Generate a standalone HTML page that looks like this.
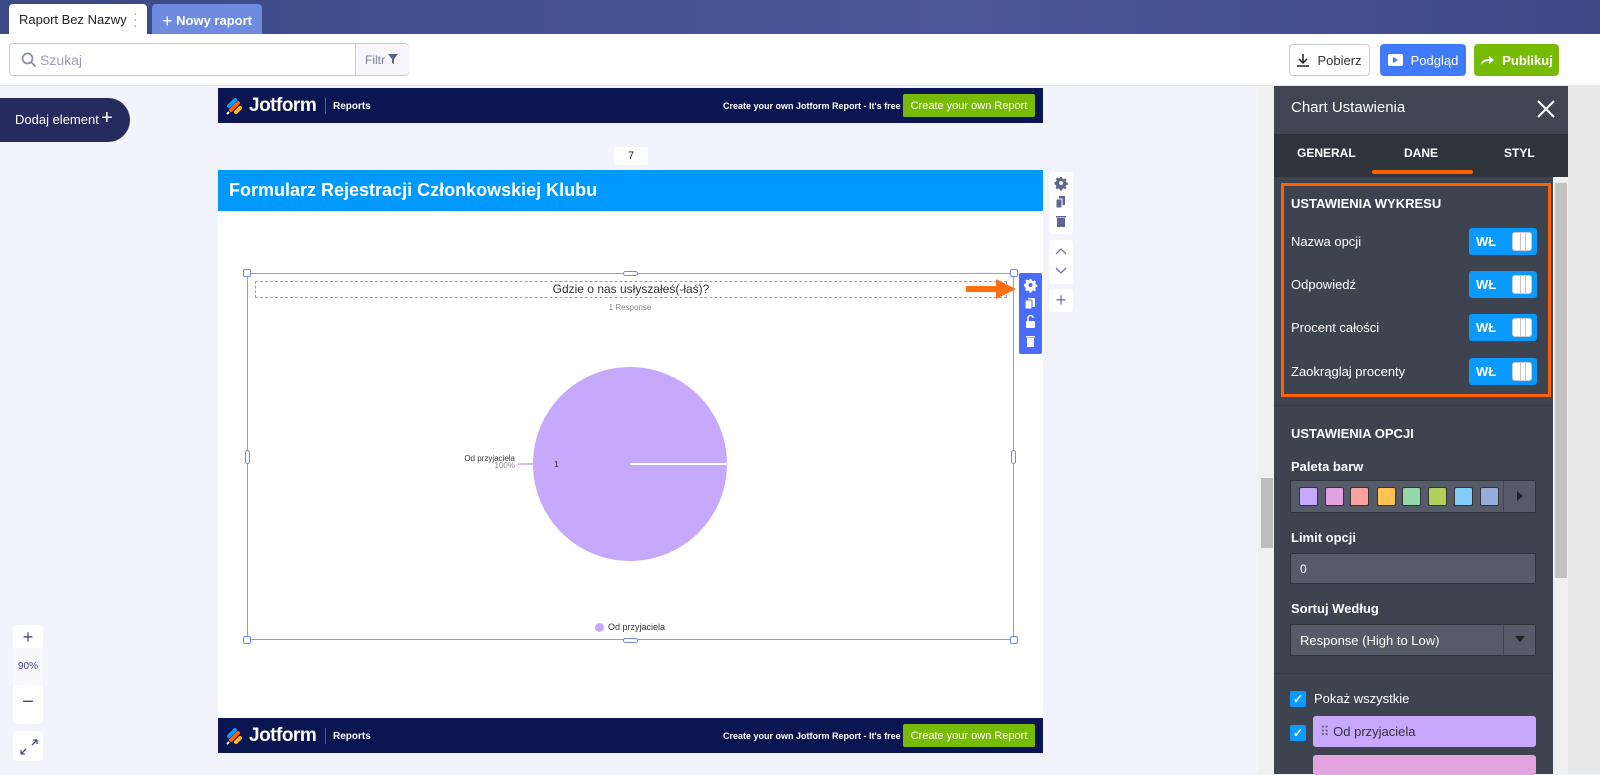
<!DOCTYPE html>
<html><head><meta charset="utf-8">
<style>
*{box-sizing:border-box;margin:0;padding:0}
body{width:1600px;height:774px;overflow:hidden;font-family:"Liberation Sans",sans-serif;background:#f3f3fc;position:relative;font-size:13px}
.a{position:absolute}
.top{left:0;top:0;width:1600px;height:34px;background:linear-gradient(90deg,#3b4a85,#4a5796 60%,#3d4a86);}
.tab1{left:9px;top:4px;width:138px;height:30px;background:#fff;border-radius:4px 4px 0 0;font-size:13px;color:#222;padding:8px 0 0 10px}
.tab2{left:152px;top:4px;width:110px;height:30px;background:#6e8cdf;border-radius:4px 4px 0 0;color:#fff;font-weight:bold;font-size:13px;padding:7px 0 0 10px}
.bar{left:0;top:34px;width:1600px;height:52px;background:#fff;border-bottom:1px solid #e3e5ef}
.search{left:9px;top:43px;width:400px;height:33px;border:1px solid #c9cbd6;border-radius:4px;background:#fff}
.btn{top:44px;height:32px;border-radius:4px;font-size:13px;display:flex;align-items:center;justify-content:center;gap:8px}
.navy{background:#0a1551;left:218px;width:825px;height:35px}
.jf{color:#fff;font-weight:bold;font-size:19px;letter-spacing:-.5px}
.green{background:#78bb07;color:#fff;font-size:11px;border-radius:2px}
.tog{left:1469px;width:68px;height:27px;background:#0a99ff;border-radius:3px;color:#fff;font-weight:bold;font-size:13px;padding:6px 0 0 7px}
.tog i{position:absolute;right:5px;top:4px;width:20px;height:19px;border-radius:3px;border:1px solid #ccc;background:repeating-linear-gradient(90deg,#fff 0 4px,#c4c4c4 4px 5px) 3px 0/12px 100% no-repeat #fff;}
.lbl{left:1291px;color:#fff;font-size:13px}
.h{left:1291px;color:#fff;font-size:13px;font-weight:bold}
.inp{left:1290px;width:246px;background:#555b69;border:1px solid #2f333c;border-radius:2px;color:#fff}
.sw{top:487px;width:19px;height:19px;border:1px solid #333;border-radius:2px}
.cb{left:1290px;width:16px;height:16px;background:#0a99ff;border-radius:2px;color:#fff;font-size:12px;text-align:center;line-height:16px;font-weight:bold}
.tb{background:#fff;border-radius:3px;left:1049px;width:24px;color:#6f76a7;text-align:center}
</style></head><body>
<div class="a top"></div>
<div class="a tab1">Raport Bez Nazwy <span style="color:#999;position:absolute;left:124px;top:6px;font-size:14px;line-height:6px">·<br>·<br>·</span></div>
<div class="a tab2"><span style="font-size:18px;font-weight:normal;vertical-align:-2px">+</span> Nowy raport</div>
<div class="a bar"></div>
<div class="a search">
<svg class="a" style="left:11px;top:8px" width="16" height="16" viewBox="0 0 16 16"><circle cx="6.5" cy="6.5" r="5" stroke="#8a8fa8" stroke-width="1.8" fill="none"/><path d="M10 10l4.5 4.5" stroke="#8a8fa8" stroke-width="1.8"/></svg>
<span class="a" style="left:30px;top:8px;color:#9a9eb3;font-size:14px">Szukaj</span>
<div class="a" style="left:345px;top:0;width:54px;height:31px;border-left:1px solid #c9cbd6;background:#f7f7fb;color:#7a7f9a;font-size:12px;padding:9px 0 0 9px;border-radius:0 4px 4px 0">Filtr <svg width="10" height="10" viewBox="0 0 10 10"><path d="M0 0h10L6 5v5L4 9V5z" fill="#5a6290"/></svg></div>
</div>
<div class="a btn" style="left:1289px;width:81px;border:1px solid #c9cbd6;color:#333;background:#fff"><svg width="12" height="13" viewBox="0 0 12 13"><path d="M6 0v9M2 5l4 4 4-4M0 12h12" stroke="#222" stroke-width="1.5" fill="none"/></svg>Pobierz</div>
<div class="a btn" style="left:1380px;width:86px;background:#3f7bfa;color:#fff"><svg width="15" height="12"><rect width="15" height="12" rx="2" fill="#fff"/><path d="M5 3l5 3-5 3z" fill="#3f7bfa"/></svg>Podgląd</div>
<div class="a btn" style="left:1474px;width:85px;background:#78bb07;color:#fff;font-weight:bold"><svg width="14" height="11"><path d="M1 10C2 5 5 4 9 4V1l5 4-5 4V6C6 6 3 7 1 10z" fill="#fff"/></svg>Publikuj</div>

<div class="a" style="left:0;top:98px;width:130px;height:44px;background:#252b5c;border-radius:0 22px 22px 0;color:#fff;font-size:13px;padding:14px 0 0 15px">Dodaj element <span style="font-size:20px;position:absolute;left:101px;top:10px;line-height:20px">+</span></div>

<!-- report -->
<div class="a navy" style="top:88px">
<svg class="a" style="left:8px;top:9px" width="18" height="18" viewBox="0 0 18 18"><path d="M3 9l6-6" stroke="#0a99ff" stroke-width="4" stroke-linecap="round"/><path d="M5 13l7-7" stroke="#ff6100" stroke-width="4" stroke-linecap="round"/><path d="M10 15l4-4" stroke="#ffb629" stroke-width="4" stroke-linecap="round"/><path d="M1 17l2-2" stroke="#fff" stroke-width="2"/></svg>
<span class="a jf" style="left:31px;top:7px">Jotform</span>
<div class="a" style="left:107px;top:10px;width:1px;height:16px;background:#555c88"></div>
<span class="a" style="left:115px;top:13px;color:#fff;font-weight:bold;font-size:10px">Reports</span>
<span class="a" style="left:505px;top:13px;color:#fff;font-size:9px;font-weight:bold">Create your own Jotform Report - It's free</span>
<div class="a green" style="left:685px;top:6px;width:132px;height:23px;padding-top:6px;text-align:center">Create your own Report</div>
</div>
<div class="a" style="left:614px;top:147px;width:34px;height:18px;background:#fff;border-radius:2px;text-align:center;font-size:11px;padding-top:3px;color:#222">7</div>
<div class="a" style="left:218px;top:170px;width:825px;height:41px;background:#0099ff;color:#fff;font-weight:bold;font-size:18px;padding:10px 0 0 11px">Formularz Rejestracji Członkowskiej Klubu</div>
<div class="a" style="left:218px;top:211px;width:825px;height:507px;background:#fff"></div>
<div class="a navy" style="top:718px">
<svg class="a" style="left:8px;top:9px" width="18" height="18" viewBox="0 0 18 18"><path d="M3 9l6-6" stroke="#0a99ff" stroke-width="4" stroke-linecap="round"/><path d="M5 13l7-7" stroke="#ff6100" stroke-width="4" stroke-linecap="round"/><path d="M10 15l4-4" stroke="#ffb629" stroke-width="4" stroke-linecap="round"/><path d="M1 17l2-2" stroke="#fff" stroke-width="2"/></svg>
<span class="a jf" style="left:31px;top:7px">Jotform</span>
<div class="a" style="left:107px;top:10px;width:1px;height:16px;background:#555c88"></div>
<span class="a" style="left:115px;top:13px;color:#fff;font-weight:bold;font-size:10px">Reports</span>
<span class="a" style="left:505px;top:13px;color:#fff;font-size:9px;font-weight:bold">Create your own Jotform Report - It's free</span>
<div class="a green" style="left:685px;top:6px;width:132px;height:23px;padding-top:6px;text-align:center">Create your own Report</div>
</div>

<!-- chart -->
<div class="a" style="left:247px;top:273px;width:767px;height:367px;border:1px solid #8a9cf5"></div>
<div class="a" style="left:255px;top:281px;width:752px;height:17px;border:1px dashed #8a9cf5;text-align:center;font-size:12px;color:#333;line-height:15px">Gdzie o nas usłyszałeś(-łaś)?</div>
<div class="a" style="left:580px;top:303px;width:100px;text-align:center;font-size:8px;color:#888">1 Response</div>
<div class="a" style="left:243px;top:636px;width:8px;height:8px;border:1px solid #6f86f0;background:#fff;border-radius:2px"></div>
<div class="a" style="left:1010px;top:636px;width:8px;height:8px;border:1px solid #6f86f0;background:#fff;border-radius:2px"></div>
<div class="a" style="left:243px;top:269px;width:8px;height:8px;border:1px solid #6f86f0;background:#fff;border-radius:2px"></div>
<div class="a" style="left:1010px;top:269px;width:8px;height:8px;border:1px solid #6f86f0;background:#fff;border-radius:2px"></div>
<div class="a" style="left:623px;top:271px;width:15px;height:5px;border:1px solid #6f86f0;background:#fff;border-radius:3px"></div>
<div class="a" style="left:623px;top:638px;width:15px;height:5px;border:1px solid #6f86f0;background:#fff;border-radius:3px"></div>
<div class="a" style="left:245px;top:450px;width:5px;height:14px;border:1px solid #6f86f0;background:#fff;border-radius:3px"></div>
<div class="a" style="left:1011px;top:450px;width:5px;height:14px;border:1px solid #6f86f0;background:#fff;border-radius:3px"></div>
<svg class="a" style="left:440px;top:360px" width="300" height="210">
<circle cx="190" cy="104" r="97" fill="#c6a8fc"/>
<path d="M190 104H287" stroke="#fff" stroke-width="2"/>
<path d="M78 104H93" stroke="#c6a8fc" stroke-width="1.5"/>
<text x="75" y="101" font-size="8" fill="#333" text-anchor="end" font-family="Liberation Sans">Od przyjaciela</text>
<text x="75" y="108" font-size="8" fill="#888" text-anchor="end" font-family="Liberation Sans">100%</text>
<text x="114" y="107" font-size="8" fill="#222" font-family="Liberation Sans">1</text>
</svg>
<div class="a" style="left:595px;top:623px;width:9px;height:9px;border-radius:50%;background:#c6a8fc"></div>
<span class="a" style="left:608px;top:622px;font-size:9px;color:#333">Od przyjaciela</span>
<!-- blue tool strip -->
<div class="a" style="left:1019px;top:273px;width:23px;height:81px;background:#4a6cf7;border-radius:2px"></div>
<svg class="a" style="left:1019px;top:273px" width="23" height="81">
<path d="M10.5 6h2l.4 1.6 1.3.6 1.4-.9 1.4 1.4-.9 1.4.6 1.3 1.6.4v2l-1.6.4-.6 1.3.9 1.4-1.4 1.4-1.4-.9-1.3.6-.4 1.6h-2l-.4-1.6-1.3-.6-1.4.9-1.4-1.4.9-1.4-.6-1.3L5 13v-2l1.6-.4.6-1.3-.9-1.4 1.4-1.4 1.4.9 1.3-.6z" fill="#fff"/><circle cx="11.5" cy="12" r="2" fill="#4a6cf7"/>
<rect x="9" y="25" width="7" height="9" rx="1" fill="#fff"/><rect x="6" y="27" width="7" height="9" rx="1" fill="#fff" stroke="#4a6cf7"/>
<rect x="7" y="48" width="9" height="7" rx="1" fill="#fff"/><path d="M9 48v-3a2.5 2.5 0 0 1 5 0" stroke="#fff" fill="none" stroke-width="1.5"/>
<rect x="8" y="65" width="7" height="9" fill="#fff"/><rect x="7" y="63" width="9" height="1.5" fill="#fff"/>
</svg>
<svg class="a" style="left:964px;top:276px" width="56" height="26"><path d="M2 10h30V3l20 10-20 10v-7H2z" fill="#ff6f0f"/></svg>
<!-- side toolbar -->
<div class="a tb" style="top:172px;height:62px"></div>
<svg class="a" style="left:1049px;top:172px" width="24" height="62"><path d="M11 5h2l.4 1.6 1.3.6 1.4-.9 1.4 1.4-.9 1.4.6 1.3 1.6.4v2l-1.6.4-.6 1.3.9 1.4-1.4 1.4-1.4-.9-1.3.6-.4 1.6h-2l-.4-1.6-1.3-.6-1.4.9-1.4-1.4.9-1.4-.6-1.3L5.5 12v-2l1.6-.4.6-1.3-.9-1.4 1.4-1.4 1.4.9 1.3-.6z" fill="#5e6593"/><circle cx="12" cy="11" r="2" fill="#fff"/><rect x="10" y="24" width="6" height="9" fill="#5e6593"/><rect x="7" y="27" width="6" height="9" fill="#5e6593" stroke="#fff"/><rect x="8" y="46" width="8" height="9" fill="#5e6593"/><rect x="7" y="44" width="10" height="1.5" fill="#5e6593"/></svg>
<div class="a tb" style="top:240px;height:44px"></div>
<svg class="a" style="left:1049px;top:240px" width="24" height="44"><path d="M7 14l5-5 5 5M7 28l5 5 5-5" stroke="#6f76a7" fill="none" stroke-width="1.3"/></svg>
<div class="a tb" style="top:289px;height:23px;font-size:18px;line-height:22px">+</div>

<!-- zoom -->
<div class="a" style="left:13px;top:625px;width:30px;height:99px;background:#fff;border-radius:4px;text-align:center;color:#454b7a">
<div style="font-size:18px;height:23px;line-height:24px">+</div>
<div style="background:#f8f8fc;height:37px;font-size:10px;line-height:37px">90%</div>
<div style="font-size:20px;line-height:34px">−</div></div>
<div class="a" style="left:13px;top:731px;width:30px;height:30px;background:#fff;border-radius:4px"></div>
<svg class="a" style="left:13px;top:731px" width="30" height="30"><path d="M24 9l-5 5M24 9h-4M24 9v4M8 23l5-5M8 23h4M8 23v-4" stroke="#454b7a" stroke-width="1.3" fill="none"/></svg>

<!-- canvas scrollbar -->
<div class="a" style="left:1258px;top:86px;width:16px;height:688px;background:#f0f0f0"></div>
<div class="a" style="left:1261px;top:478px;width:12px;height:70px;background:#bdbdbd"></div>

<!-- right panel -->
<div class="a" style="left:1274px;top:86px;width:326px;height:688px;background:#e8e8e8"></div>
<div class="a" style="left:1274px;top:86px;width:294px;height:688px;background:#3e4350"></div>
<div class="a" style="left:1274px;top:86px;width:294px;height:48px;background:#404553;color:#fff;font-size:15px;padding:13px 0 0 17px">Chart Ustawienia</div>
<svg class="a" style="left:1536px;top:99px" width="20" height="20"><path d="M2 2l16 16M18 2L2 18" stroke="#fff" stroke-width="2"/></svg>
<div class="a" style="left:1274px;top:134px;width:294px;height:43px;background:#2f333c;color:#fff;font-size:12px;font-weight:bold">
<span class="a" style="left:23px;top:12px">GENERAL</span><span class="a" style="left:130px;top:12px">DANE</span><span class="a" style="left:230px;top:12px">STYL</span>
<div class="a" style="left:98px;top:36px;width:101px;height:4px;background:#ff6100;border-radius:2px"></div></div>
<div class="a" style="left:1553px;top:177px;width:15px;height:597px;background:#f0f0f0"></div>
<div class="a" style="left:1555px;top:183px;width:12px;height:395px;background:#c2c2c2"></div>
<div class="a" style="left:1281px;top:183px;width:270px;height:214px;border:3px solid #ff6100"></div>
<div class="a h" style="top:196px">USTAWIENIA WYKRESU</div>
<div class="a lbl" style="top:234px">Nazwa opcji</div><div class="a tog" style="top:228px">WŁ<i></i></div>
<div class="a lbl" style="top:277px">Odpowiedź</div><div class="a tog" style="top:271px">WŁ<i></i></div>
<div class="a lbl" style="top:320px">Procent całości</div><div class="a tog" style="top:314px">WŁ<i></i></div>
<div class="a lbl" style="top:364px">Zaokrąglaj procenty</div><div class="a tog" style="top:358px">WŁ<i></i></div>
<div class="a" style="left:1274px;top:405px;width:279px;height:1px;background:#363a45"></div>
<div class="a h" style="top:426px">USTAWIENIA OPCJI</div>
<div class="a h" style="top:459px">Paleta barw</div>
<div class="a inp" style="top:480px;height:33px"></div>
<div class="a" style="left:1503px;top:481px;width:1px;height:31px;background:#3e4350"></div>
<div class="a" style="left:1517px;top:491px;width:0;height:0;border-left:6px solid #222;border-top:5px solid transparent;border-bottom:5px solid transparent"></div>
<div class="a sw" style="left:1299px;background:#c6a8fc"></div>
<div class="a sw" style="left:1325px;background:#e1a0e0"></div>
<div class="a sw" style="left:1350px;background:#fca1a1"></div>
<div class="a sw" style="left:1377px;background:#ffc253"></div>
<div class="a sw" style="left:1402px;background:#92d8a9"></div>
<div class="a sw" style="left:1428px;background:#b1cf5b"></div>
<div class="a sw" style="left:1454px;background:#82cdfa"></div>
<div class="a sw" style="left:1480px;background:#95acdc"></div>
<div class="a h" style="top:530px">Limit opcji</div>
<div class="a inp" style="top:553px;height:31px;font-size:12px;padding:8px 0 0 9px">0</div>
<div class="a h" style="top:601px">Sortuj Według</div>
<div class="a inp" style="top:624px;height:32px;font-size:13px;padding:8px 0 0 9px">Response (High to Low)</div>
<div class="a" style="left:1503px;top:625px;width:1px;height:30px;background:#3e4350"></div>
<div class="a" style="left:1515px;top:636px;border-top:6px solid #222;border-left:5px solid transparent;border-right:5px solid transparent"></div>
<div class="a" style="left:1274px;top:673px;width:279px;height:1px;background:#363a45"></div>
<div class="a cb" style="top:691px">✓</div><div class="a lbl" style="left:1314px;top:691px">Pokaż wszystkie</div>
<div class="a cb" style="top:725px">✓</div>
<div class="a" style="left:1313px;top:716px;width:223px;height:31px;background:#c8a8fc;border-radius:3px;font-size:13px;color:#333;padding:8px 0 0 7px"><span style="color:#6a5a8a">⠿</span> Od przyjaciela</div>
<div class="a" style="left:1313px;top:755px;width:223px;height:20px;background:#e2a3e0;border-radius:3px"></div>
</body></html>
